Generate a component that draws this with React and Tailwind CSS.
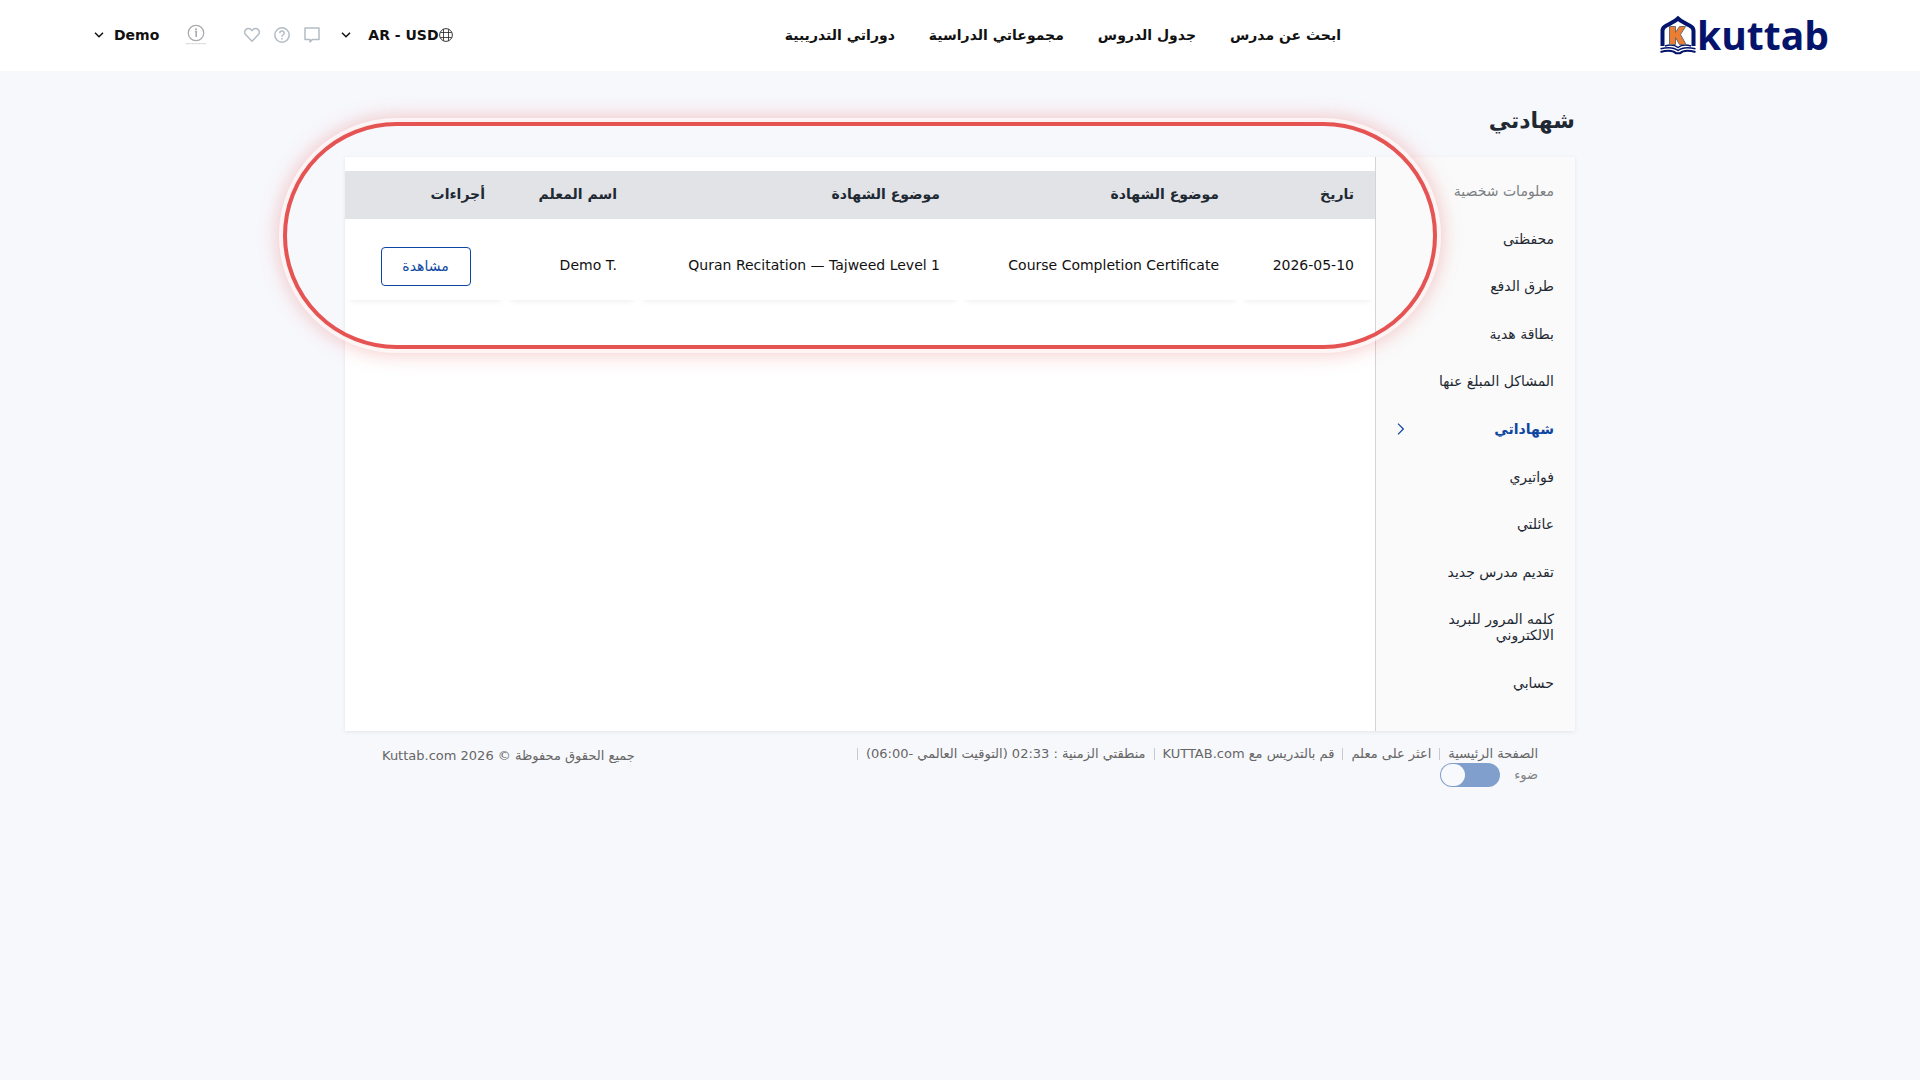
const navLinks = ["ابحث عن مدرس", "جدول الدروس", "مجموعاتي الدراسية", "دوراتي التدريبية"];

const menuItems = [
  { label: "معلومات شخصية", muted: true },
  { label: "محفظتى" },
  { label: "طرق الدفع" },
  { label: "بطاقة هدية" },
  { label: "المشاكل المبلغ عنها" },
  { label: "شهاداتي", active: true },
  { label: "فواتيري" },
  { label: "عائلتي" },
  { label: "تقديم مدرس جديد" },
  { label: "كلمه المرور للبريد الالكتروني" },
  { label: "حسابي" },
];

const footerLinks = [
  "الصفحة الرئيسية",
  "اعثر على معلم",
  "قم بالتدريس مع KUTTAB.com",
  "منطقتي الزمنية : 02:33 (التوقيت العالمي -06:00)",
];

const certificates = [
  {
    date: "2026-05-10",
    title: "Course Completion Certificate",
    subject: "Quran Recitation — Tajweed Level 1",
    teacher: "Demo T.",
  },
];

const Logo = () => (
  <a href="#" dir="ltr" aria-label="kuttab" className="w-[170px] shrink-0 flex items-center text-[#04136b]">
    <svg viewBox="0 0 36 40" className="w-9 h-10 shrink-0" fill="none">
      <path
        d="M2.500 31V15.500C2.500 11.500 6 11 9 9.200C12 7.500 15.500 6 18 3.500C20.500 6 24 7.500 27 9.200C30 11 33.500 11.500 33.500 15.500V31"
        stroke="currentColor"
        strokeWidth="4"
      />
      <path d="M5 31C10 29.500 15 30 18 32.500C21 30 26 29.500 31 31" stroke="currentColor" strokeWidth="1.500" />
      <path
        d="M.5 33.800C7 32.300 14 32.300 18 35.500C22 32.300 29 32.300 35.500 33.800"
        stroke="currentColor"
        strokeWidth="1.500"
      />
      <path
        d="M.5 37C7 35.300 13 35.300 16 38.300H20C23 35.300 29 35.300 35.500 37"
        stroke="currentColor"
        strokeWidth="2"
      />
      <path
        d="M9.500 11.500h6v6l4-6h6l-5 8 5.500 10h-6.500l-4-7v7h-6z"
        fill="#ec7d31"
        stroke="#6b6b70"
        strokeWidth="1"
      />
    </svg>
    <span className="ms-[1px] font-['Open_Sans'] font-bold text-[39px] leading-10">kuttab</span>
  </a>
);

const ChevronDown = () => (
  <svg viewBox="0 0 10 6" className="w-[10px] h-[6px]" fill="none" stroke="currentColor" strokeWidth="1.5">
    <path d="M1 .8l4 4 4-4" />
  </svg>
);

const InfoIcon = () => (
  <svg viewBox="0 0 20 22" className="w-5 h-[22px]" fill="none" stroke="#a9abae">
    <circle cx="10" cy="9" r="7.700" strokeWidth="1.300" />
    <path d="M8.900 7.800H10.200V13" strokeWidth="1.600" />
    <circle cx="10" cy="5.300" r="1.100" fill="#a9abae" stroke="none" />
    <path d="M0 19.700h20" strokeWidth="1" strokeDasharray="3 .5 2 .4" stroke="#cfd1d3" />
  </svg>
);

const HeartIcon = () => (
  <svg viewBox="0 0 16 16" className="w-4 h-4" fill="none" stroke="#b3bcc4" strokeWidth="1.500">
    <path d="M8 14.200L1.800 7.800C.5 6.300.5 4 1.800 2.600C3.300 1.100 5.600 1.100 7 2.600L8 3.600L9 2.600C10.400 1.100 12.700 1.100 14.200 2.600C15.500 4 15.500 6.300 14.200 7.800Z" />
  </svg>
);

const HelpIcon = () => (
  <svg viewBox="0 0 16 16" className="w-4 h-4" fill="none" stroke="#b3bcc4" strokeWidth="1.500">
    <circle cx="8" cy="8" r="7.200" />
    <path d="M5.800 6.300C5.800 3.400 10.200 3.400 10.200 6.200C10.200 7.800 8 7.700 8 9.800" />
    <path d="M8 10.900v1.500" />
  </svg>
);

const MessageIcon = () => (
  <svg viewBox="0 0 16 16" className="w-4 h-4" fill="none" stroke="#b3bcc4" strokeWidth="1.500">
    <path d="M1 .9h14v11.500H8.500L6 14.900v-2.500H1z" strokeLinejoin="round" />
  </svg>
);

const GlobeIcon = () => (
  <svg viewBox="0 0 14 14" className="w-[14px] h-[14px]" fill="none" stroke="#222" strokeWidth=".9">
    <circle cx="7" cy="7" r="6.400" />
    <path d="M4.500 1.200v11.600M9.500 1.200v11.600M1.300 4.500h11.400M1.300 9.500h11.400" strokeWidth=".8" />
  </svg>
);

const Header = () => (
  <header className="bg-white h-[71px] px-[90px] pb-[2px] flex items-center text-sm font-bold text-[#111]">
    <Logo />
    <nav className="flex gap-[34px] ms-[319px]">
      {navLinks.map((link) => (
        <a key={link} href="#">
          {link}
        </a>
      ))}
    </nav>

    <div dir="ltr" className="me-auto ml-0 flex items-center">
      <button type="button" className="flex items-center gap-[10px] ps-1">
        <ChevronDown />
        Demo
      </button>
      <a href="#" aria-label="معلومات" className="ms-[27px]">
        <InfoIcon />
      </a>
      <div className="flex gap-[14px] ms-[38px]">
        <a href="#" aria-label="المفضلة"><HeartIcon /></a>
        <a href="#" aria-label="مساعدة"><HelpIcon /></a>
        <a href="#" aria-label="الرسائل"><MessageIcon /></a>
      </div>
      <button type="button" className="flex items-center ms-[21px]">
        <ChevronDown />
        <span className="ms-[17px]">AR - USD</span>
        <GlobeIcon />
      </button>
    </div>
  </header>
);

const Sidebar = () => (
  <aside className="w-[200px] shrink-0 bg-[#fafafa] border-e border-[#d3d4d6] px-[21px] pt-[26px] pb-10 flex flex-col justify-between text-sm leading-4 text-[#1f2933]">
    {menuItems.map((item) =>
      item.active ? (
        <a key={item.label} href="#" className="flex items-center justify-between font-bold text-[#0d47a1]">
          {item.label}
          <svg viewBox="0 0 7 12" className="w-[7px] h-3" fill="none" stroke="currentColor" strokeWidth="1.200">
            <path d="M1 .7L6.300 6 1 11.300" />
          </svg>
        </a>
      ) : (
        <a key={item.label} href="#" className={item.muted ? "text-[#7b7f83]" : ""}>
          {item.label}
        </a>
      )
    )}
  </aside>
);

const CertificatesTable = () => (
  <table className="w-full mt-[14px] text-sm text-start table-fixed">
    <thead>
      <tr className="h-12 bg-[#e1e3e7] text-[#1f2933]">
        <th className="w-[135px] px-[21px] pb-[2px] text-start">تاريخ</th>
        <th className="w-[279px] px-[21px] pb-[2px] text-start">موضوع الشهادة</th>
        <th className="w-[323px] px-[21px] pb-[2px] text-start">موضوع الشهادة</th>
        <th className="w-[132px] px-[21px] pb-[2px] text-start">اسم المعلم</th>
        <th className="px-[21px] pb-[2px] text-start">أجراءات</th>
      </tr>
    </thead>
    <tbody>
      {certificates.map((row) => (
        <tr key={row.date} className="h-[81px] text-[#111]">
          <td className="px-[21px] pt-[10px] shadow-[0_6px_6px_-5px_rgba(0,0,0,0.08)]">{row.date}</td>
          <td dir="ltr" className="px-[21px] pt-[10px] text-right shadow-[0_6px_6px_-5px_rgba(0,0,0,0.08)]">{row.title}</td>
          <td dir="ltr" className="px-[21px] pt-[10px] text-right shadow-[0_6px_6px_-5px_rgba(0,0,0,0.08)]">{row.subject}</td>
          <td dir="ltr" className="px-[21px] pt-[10px] text-right shadow-[0_6px_6px_-5px_rgba(0,0,0,0.08)]">{row.teacher}</td>
          <td className="pt-[14px] text-center shadow-[0_6px_6px_-5px_rgba(0,0,0,0.08)]">
            <button type="button" className="w-[90px] h-[39px] pb-px border border-[#0d47a1] rounded text-[#0d47a1]">
              مشاهدة
            </button>
          </td>
        </tr>
      ))}
    </tbody>
  </table>
);

const Footer = () => (
  <footer className="px-[37px] pt-[14px] flex justify-between items-start text-[13px] leading-[18px] text-[#666]">
    <div>
      <ul className="flex items-center">
        {footerLinks.map((link) => (
          <li key={link} className="flex items-center">
            <a href="#">{link}</a>
            <span className="w-px h-3 mx-2 bg-[#c8cacd]"></span>
          </li>
        ))}
      </ul>
      <label className="flex items-center gap-[14px] text-[#808285]">
        ضوء
        <input
          type="checkbox"
          className="appearance-none w-[60px] h-6 rounded-full bg-[#819fcd] flex items-center justify-end px-px before:content-[''] before:w-6 before:h-[22px] before:rounded-full before:bg-[#f8f9fc]"
        />
      </label>
    </div>
    <p className="pt-[2px]">جميع الحقوق محفوظة © 2026 Kuttab.com</p>
  </footer>
);

const App = () => {
  return (
    <div dir="rtl" className="min-h-screen bg-[#f7f8fc] font-['DejaVu_Sans',sans-serif]">
      <Header />
      <main className="max-w-[1230px] mx-auto">
        <h1 className="pt-[34px] pb-5 text-[22px] leading-8 font-bold text-[#1f2933]">شهادتي</h1>

        <div className="relative">
          <div className="flex min-h-[574px] bg-white shadow-[0_1px_4px_rgba(0,0,0,0.08)]">
            <Sidebar />
            <section className="flex-1">
              <CertificatesTable />
            </section>
          </div>
          {/* highlight ring over the certificates */}
          <div className="absolute pointer-events-none -top-[35px] -left-[62px] right-[138px] h-[227px] rounded-full border-4 border-[#e55353] shadow-[0_0_0_4px_rgba(255,255,255,0.7),0_0_20px_4px_rgba(229,83,83,0.35)]"></div>
        </div>

        <Footer />
      </main>
    </div>
  );
};

export default App;
